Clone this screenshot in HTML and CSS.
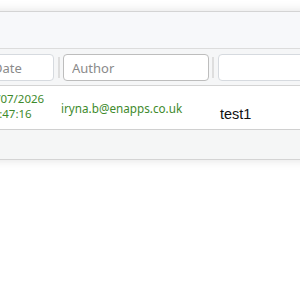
FILE: index.html
```html
<!DOCTYPE html>
<html lang="en">
<head>
    <meta charset="UTF-8">
    <meta name="viewport" content="width=device-width, initial-scale=1.0">
    <title>Comments</title>
    <link rel="stylesheet" href="styles.css">
</head>
<body>
    <div class="grid-panel">
        <div class="toolbar"></div>

        <div class="filter-row">
            <div class="cell cell-date">
                <input type="text" class="filter-input" placeholder="Date">
            </div>
            <span class="handle"></span>
            <div class="cell cell-author">
                <input type="text" class="filter-input active" placeholder="Author">
            </div>
            <span class="handle"></span>
            <div class="cell cell-text">
                <input type="text" class="filter-input">
            </div>
        </div>

        <div class="data-row">
            <div class="cell cell-date date-text">
                <span>10/07/2026</span>
                <span class="time">12:47:16</span>
            </div>
            <div class="cell cell-author author-text">iryna.b@enapps.co.uk</div>
            <div class="cell cell-text comment-text">test1</div>
        </div>

        <div class="footer"></div>
    </div>
</body>
</html>
```

FILE: styles.css
```css
* {
    margin: 0;
    padding: 0;
    box-sizing: border-box;
}

body {
    font-family: 'Noto Sans', sans-serif;
    background: white;
    width: 300px;
    height: 300px;
    overflow: hidden;
    padding-top: 11px;
}

.grid-panel {
    margin: 0 -20px;
    background: white;
    border-top: 1px solid #d4d4d4;
    border-bottom: 1px solid #d4d4d4;
    box-shadow: 0 0 10px rgba(0, 0, 0, 0.12);
}

.toolbar {
    height: 37px;
    background: #f7f8fa;
    border-bottom: 1px solid #dcdcdc;
}

.filter-row {
    display: flex;
    align-items: center;
    height: 37px;
    padding-top: 1px;
    background: #f5f6f7;
    border-bottom: 1px solid #d4d4d4;
}

.cell-date {
    flex: 0 0 78px;
    padding: 0 4px;
}

.cell-author {
    flex: 0 0 152px;
    padding: 0 3px;
}

.cell-text {
    flex: 1;
    padding-left: 4px;
}

.handle {
    flex: 0 0 2px;
    height: 21px;
    background: #dedede;
}

.filter-input {
    display: block;
    width: 100%;
    height: 27px;
    padding: 0 8px;
    border: 1px solid #d6dadf;
    border-radius: 4px;
    background: white;
    font-family: inherit;
    font-size: 13px;
}

.filter-input.active {
    border-color: #bdbdbd;
}

.filter-input::placeholder {
    color: #8a8a8a;
}

.data-row {
    display: flex;
    align-items: center;
    height: 44px;
    border-bottom: 1px solid #d0d0d0;
}

.data-row .cell-author {
    flex-basis: 154px;
}

.date-text {
    display: flex;
    flex-direction: column;
    color: #3e8a2c;
    font-size: 11.5px;
    line-height: 15px;
    padding: 0 0 4px 3px;
}

.date-text .time {
    padding-left: 3px;
}

.author-text {
    color: #3e8a2c;
    font-size: 11.7px;
}

.comment-text {
    font-family: 'Liberation Sans', Arial, sans-serif;
    font-size: 14.5px;
    color: #111;
    padding: 12px 0 0 8px;
}

.footer {
    height: 29px;
    background: #f5f6f6;
}
```
